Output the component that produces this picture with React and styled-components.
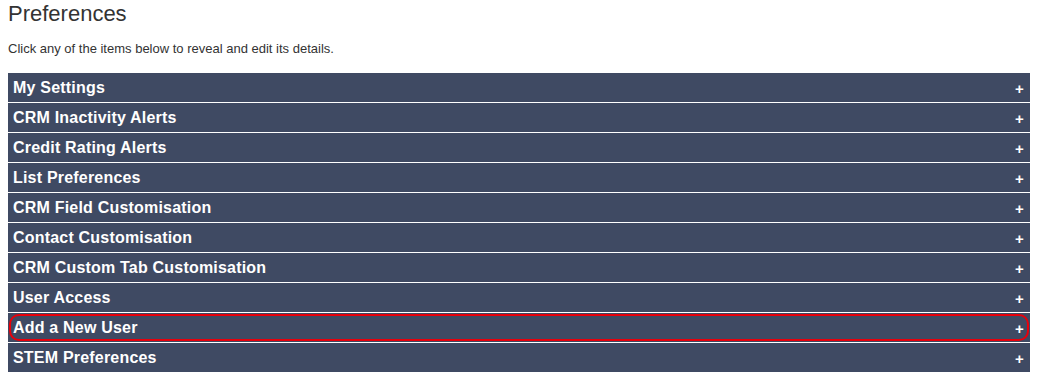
import styled, { createGlobalStyle } from "styled-components";

const GlobalStyle = createGlobalStyle`
  body {
    margin: 0;
    background: #fff;
    font-family: "Liberation Sans", Arial, sans-serif;
    color: #333;
  }
`;

const Page = styled.div`
  padding: 0 8px;
`;

const Title = styled.h1`
  margin: 0;
  padding-top: 1px;
  font-size: 22px;
  font-weight: normal;
  line-height: 26px;
  color: #333;
`;

const Intro = styled.p`
  margin: 14px 0 0;
  font-size: 13px;
  line-height: 16px;
  color: #333;
`;

const List = styled.div`
  margin-top: 16px;
  display: flex;
  flex-direction: column;
  gap: 1px;
`;

const Row = styled.div`
  position: relative;
  height: 29px;
  padding: 1px 6px 0 5px;
  box-sizing: border-box;
  display: flex;
  align-items: center;
  justify-content: space-between;
  background: #3f4a63;
  color: #fff;
  font-size: 16px;
  font-weight: bold;
  letter-spacing: 0.2px;
  cursor: pointer;

  ${({ $highlight }) =>
    $highlight &&
    `
    &::after {
      content: "";
      position: absolute;
      top: 1px;
      bottom: 1px;
      left: 1px;
      right: 1px;
      border: 2px solid #e8000b;
      border-radius: 10px;
      pointer-events: none;
    }
  `}
`;

const Plus = styled.span`
  font-size: 15px;
  font-weight: bold;
  line-height: 1;
`;

const items = [
  "My Settings",
  "CRM Inactivity Alerts",
  "Credit Rating Alerts",
  "List Preferences",
  "CRM Field Customisation",
  "Contact Customisation",
  "CRM Custom Tab Customisation",
  "User Access",
  "Add a New User",
  "STEM Preferences",
];

export default function App() {
  return (
    <>
      <GlobalStyle />
      <Page>
        <Title>Preferences</Title>
        <Intro>Click any of the items below to reveal and edit its details.</Intro>
        <List>
          {items.map((label) => (
            <Row key={label} $highlight={label === "Add a New User"}>
              <span>{label}</span>
              <Plus>+</Plus>
            </Row>
          ))}
        </List>
      </Page>
    </>
  );
}
